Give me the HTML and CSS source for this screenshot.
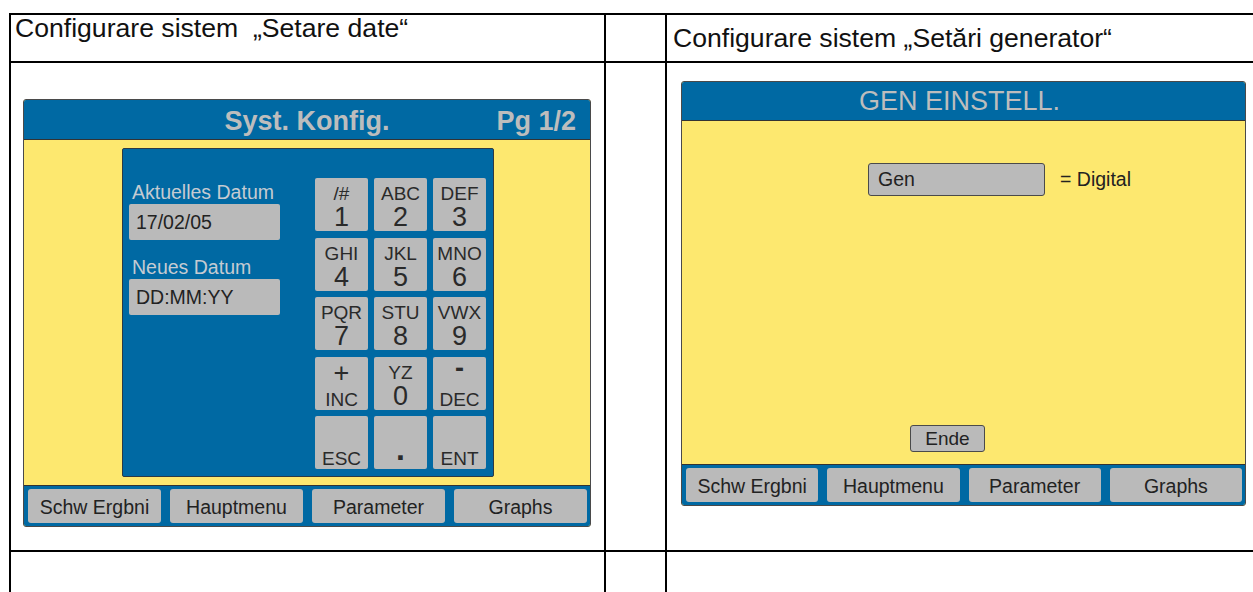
FILE: index.html
```html
<!DOCTYPE html>
<html lang="ro">
<head>
  <meta charset="UTF-8" />
  <title>Configurare sistem</title>
  <link rel="stylesheet" href="styles.css">
</head>
<body>
  <table class="doc">
    <colgroup>
      <col class="c1">
      <col class="c2">
      <col class="c3">
    </colgroup>
    <tr class="row-title">
      <td class="title-left">Configurare sistem &nbsp;„Setare date“</td>
      <td></td>
      <td class="title-right">Configurare sistem „Setări generator“</td>
    </tr>
    <tr class="row-shot">
      <td>
        <div class="screen screen-date">
          <div class="screen-head head-grid">
            <span></span>
            <span class="head-title">Syst. Konfig.</span>
            <span class="head-page">Pg 1/2</span>
          </div>
          <div class="screen-body body-keypad">
            <div class="keypad">
              <div class="dates">
                <div class="lbl">Aktuelles Datum</div>
                <div class="field">17/02/05</div>
                <div class="lbl lbl-2">Neues Datum</div>
                <div class="field">DD:MM:YY</div>
              </div>
              <div class="keys">
                <div class="key"><span class="k-top">/#</span><span class="k-num">1</span></div>
                <div class="key"><span class="k-top">ABC</span><span class="k-num">2</span></div>
                <div class="key"><span class="k-top">DEF</span><span class="k-num">3</span></div>
                <div class="key"><span class="k-top">GHI</span><span class="k-num">4</span></div>
                <div class="key"><span class="k-top">JKL</span><span class="k-num">5</span></div>
                <div class="key"><span class="k-top">MNO</span><span class="k-num">6</span></div>
                <div class="key"><span class="k-top">PQR</span><span class="k-num">7</span></div>
                <div class="key"><span class="k-top">STU</span><span class="k-num">8</span></div>
                <div class="key"><span class="k-top">VWX</span><span class="k-num">9</span></div>
                <div class="key"><span class="k-top k-sign">+</span><span class="k-bot">INC</span></div>
                <div class="key"><span class="k-top">YZ</span><span class="k-num">0</span></div>
                <div class="key"><span class="k-top k-sign k-dash">-</span><span class="k-bot">DEC</span></div>
                <div class="key"><span class="k-top"></span><span class="k-bot">ESC</span></div>
                <div class="key"><span class="k-top"></span><span class="k-num k-dot">.</span></div>
                <div class="key"><span class="k-top"></span><span class="k-bot">ENT</span></div>
              </div>
            </div>
          </div>
          <div class="screen-foot">
            <div class="soft-btn">Schw Ergbni</div>
            <div class="soft-btn">Hauptmenu</div>
            <div class="soft-btn">Parameter</div>
            <div class="soft-btn">Graphs</div>
          </div>
        </div>
      </td>
      <td></td>
      <td>
        <div class="screen screen-gen">
          <div class="screen-head head-single">GEN EINSTELL.</div>
          <div class="screen-body body-gen">
            <div class="gen-row">
              <div class="gen-field">Gen</div>
              <span class="gen-val">= Digital</span>
            </div>
            <div class="ende-btn">Ende</div>
          </div>
          <div class="screen-foot">
            <div class="soft-btn">Schw Ergbni</div>
            <div class="soft-btn">Hauptmenu</div>
            <div class="soft-btn">Parameter</div>
            <div class="soft-btn">Graphs</div>
          </div>
        </div>
      </td>
    </tr>
    <tr class="row-empty">
      <td></td>
      <td></td>
      <td></td>
    </tr>
  </table>
</body>
</html>
```

FILE: styles.css
```css
html, body {
  overflow: hidden;
}
body {
  margin: 0;
  padding: 13px 0 0 9px;
  font-family: "Liberation Sans", Arial, sans-serif;
  color: #222;
  background: #fff;
}

/* document table */
.doc {
  table-layout: fixed;
  width: 1262px;
  border-collapse: separate;
  border-spacing: 0;
  border-left: 2px solid #000;
  border-top: 2px solid #000;
}
.doc td {
  padding: 0;
  border-right: 2px solid #000;
  border-bottom: 2px solid #000;
  vertical-align: top;
}
.c1 { width: 595px; }
.c2 { width: 61px; }
.c3 { width: 604px; }

.row-title td {
  height: 46px;
  font-size: 26.6px;
  color: #111;
  white-space: nowrap;
}
.title-left {
  line-height: 26px;
  padding-left: 4px !important;
}
.doc .title-right {
  vertical-align: middle;
  padding-left: 6px;
}
.row-shot td {
  height: 487px;
}
.row-empty td {
  height: 60px;
}

/* HMI screen */
.screen {
  box-sizing: border-box;
  display: flex;
  flex-direction: column;
  border: 1px solid #4a4a4a;
  border-radius: 3px;
  overflow: hidden;
  background: #fde86f;
}
.screen-date {
  width: 568px;
  height: 428px;
  margin: 36px 0 0 12px;
}
.screen-gen {
  width: 565px;
  height: 425px;
  margin: 18px 0 0 14px;
}
.screen-head {
  background: #0069a3;
  border-bottom: 1px solid #333;
  color: #bdbdbd;
  font-size: 27px;
}
.head-grid {
  height: 40px;
  box-sizing: border-box;
  padding: 4px 14px 0;
  display: grid;
  grid-template-columns: 1fr auto 1fr;
  align-items: center;
  font-weight: bold;
}
.head-page {
  justify-self: end;
}
.head-single {
  height: 39px;
  box-sizing: border-box;
  padding: 1px 8px 0 0;
  display: flex;
  align-items: center;
  justify-content: center;
}
.screen-body {
  flex: 1;
}
.body-keypad {
  display: flex;
  align-items: center;
  padding-left: 98px;
}

/* keypad block */
.keypad {
  box-sizing: border-box;
  width: 372px;
  height: 329px;
  padding: 29px 7px 7px 6px;
  display: flex;
  justify-content: space-between;
  background: #0069a3;
  border: 1px solid #2d3a44;
  border-radius: 2px;
}
.dates {
  width: 151px;
  padding-top: 4px;
}
.lbl {
  font-size: 19.5px;
  line-height: 21px;
  color: #c5cbd2;
  padding-left: 3px;
  white-space: nowrap;
}
.lbl-2 {
  margin-top: 17px;
}
.field {
  box-sizing: border-box;
  height: 36px;
  margin-top: 1px;
  padding-left: 7px;
  display: flex;
  align-items: center;
  background: #bababa;
  border-radius: 2px;
  font-size: 19.5px;
  color: #222;
}
.keys {
  display: grid;
  grid-template-columns: repeat(3, 53px);
  grid-template-rows: repeat(5, 53px);
  gap: 6.5px 6px;
}
.key {
  box-sizing: border-box;
  padding-top: 6px;
  display: flex;
  flex-direction: column;
  align-items: center;
  background: #bababa;
  border-radius: 2px;
  color: #2a2a2a;
}
.k-top {
  height: 20px;
  font-size: 19px;
  line-height: 20px;
}
.k-sign {
  font-size: 27px;
}
.k-dash {
  line-height: 10px;
  font-weight: bold;
}
.k-num {
  font-size: 27px;
  line-height: 26px;
}
.k-dot {
  font-size: 32px;
  font-weight: bold;
  line-height: 14px;
}
.k-bot {
  height: 26px;
  font-size: 19px;
  line-height: 34px;
}

/* soft keys */
.screen-foot {
  display: flex;
  gap: 9px;
  padding: 3px 3px 3px 4px;
  background: #0069a3;
  border-top: 1px solid #333;
}
.soft-btn {
  flex: 1;
  box-sizing: border-box;
  height: 34px;
  padding-top: 2px;
  display: flex;
  align-items: center;
  justify-content: center;
  background: #bababa;
  border-radius: 3px;
  font-size: 19.5px;
  color: #222;
}

/* generator screen */
.body-gen {
  display: flex;
  flex-direction: column;
  align-items: flex-start;
}
.gen-row {
  display: flex;
  align-items: center;
  margin: 42px 0 0 186px;
  font-size: 19.5px;
}
.gen-field {
  box-sizing: border-box;
  width: 177px;
  height: 33px;
  padding-left: 9px;
  display: flex;
  align-items: center;
  background: #bababa;
  border: 1px solid #4a4a4a;
  border-radius: 3px;
}
.gen-val {
  margin-left: 15px;
}
.ende-btn {
  box-sizing: border-box;
  width: 75px;
  height: 27px;
  margin: auto 0 12px 228px;
  display: flex;
  align-items: center;
  justify-content: center;
  background: #bababa;
  border: 1px solid #4a4a4a;
  border-radius: 3px;
  font-size: 19px;
}
```
